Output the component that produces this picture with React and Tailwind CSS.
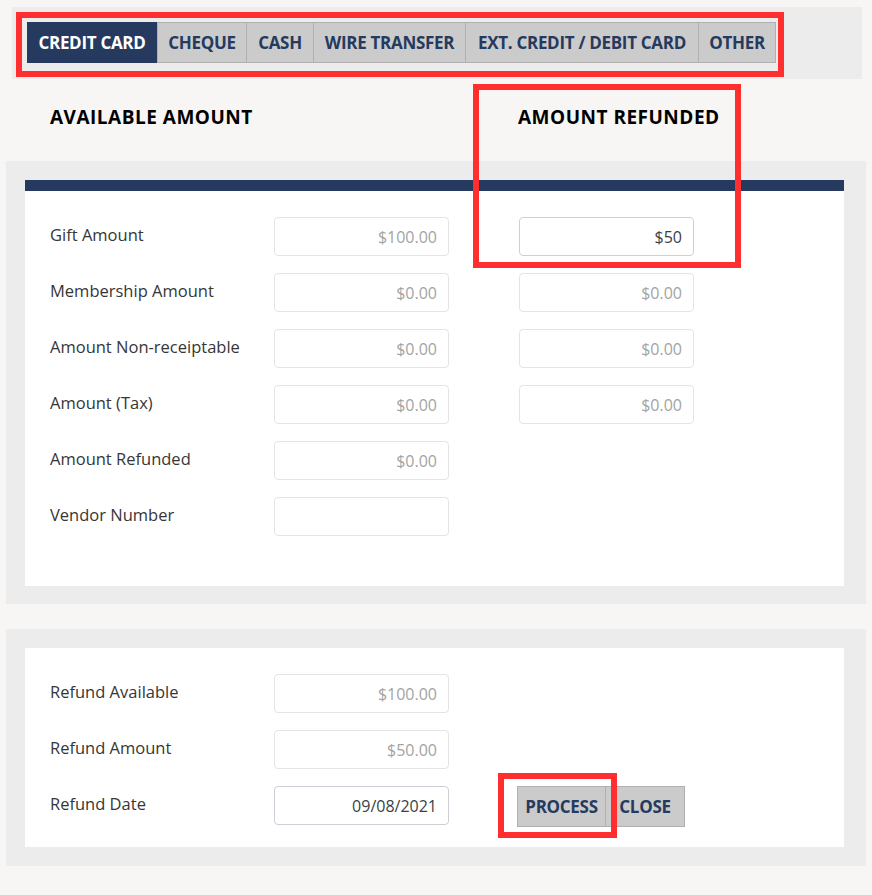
import React from "react";

const tabs = [
  { t: "CREDIT CARD", w: "w-[130px]", active: true },
  { t: "CHEQUE", w: "w-[90px]" },
  { t: "CASH", w: "w-[68px] -ml-px" },
  { t: "WIRE TRANSFER", w: "w-[153px] -ml-px" },
  { t: "EXT. CREDIT / DEBIT CARD", w: "w-[234px] -ml-px" },
  { t: "OTHER", w: "w-[78px] -ml-px" },
];

function Field({ value, enabled, className = "" }) {
  return (
    <div
      className={
        "w-[175px] h-[39px] rounded-[4px] border bg-white flex items-center justify-end pr-[11px] text-[16px] " +
        (enabled ? "border-[#ccd0d6] text-[#3a3f46]" : "border-[#e4e4e4] text-[#a3a3a3]") +
        " " +
        className
      }
    >
      {value}
    </div>
  );
}

function Label({ children }) {
  return <div className="w-[224px] text-[16.5px] font-medium text-[#363636] -mt-[3px]">{children}</div>;
}

function Row({ label, a, b, bEnabled, aEnabled }) {
  return (
    <div className="flex items-center h-[39px]">
      <Label>{label}</Label>
      {a !== undefined && <Field value={a} enabled={aEnabled} />}
      {b !== undefined && <Field value={b} enabled={bEnabled} className="ml-[70px]" />}
    </div>
  );
}

export default function App() {
  return (
    <div className="relative min-h-[895px] bg-[#f7f6f4] pt-[7px] font-['Open_Sans',sans-serif]">
      {/* Tab bar */}
      <div className="ml-[12px] w-[850px] h-[72px] bg-[#ececec] pt-[15px] pl-[15px]">
        <div className="flex h-[41px]">
          {tabs.map((tab) => (
            <div
              key={tab.t}
              className={
                "h-[41px] flex items-center justify-center font-bold text-[17px] tracking-[-0.3px] " +
                tab.w +
                " " +
                (tab.active
                  ? "bg-[#253a5e] text-white"
                  : "bg-[#cbcbcb] text-[#253a5e] border border-[#b0b0b0]")
              }
            >
              {tab.t}
            </div>
          ))}
        </div>
      </div>

      {/* Headings */}
      <div className="flex h-[82px] items-center pl-[50px]">
        <div className="w-[468px] text-[19px] font-bold tracking-[0.5px] text-black -mt-[5px]">AVAILABLE AMOUNT</div>
        <div className="text-[19px] font-bold tracking-[0.5px] text-black -mt-[5px]">AMOUNT REFUNDED</div>
      </div>

      {/* Panel 1 */}
      <div className="mx-[6px] bg-[#ececec] pt-[19px] pb-[18px] pl-[19px] pr-[22px]">
        <div className="bg-white border-t-[11px] border-[#253a5e] pt-[26px] pb-[50px] pl-[25px] flex flex-col gap-[17px]">
          <Row label="Gift Amount" a="$100.00" b="$50" bEnabled />
          <Row label="Membership Amount" a="$0.00" b="$0.00" />
          <Row label="Amount Non-receiptable" a="$0.00" b="$0.00" />
          <Row label="Amount (Tax)" a="$0.00" b="$0.00" />
          <Row label="Amount Refunded" a="$0.00" />
          <Row label="Vendor Number" a="" />
        </div>
      </div>

      {/* Panel 2 */}
      <div className="mx-[6px] mt-[25px] bg-[#ececec] pt-[19px] pb-[19px] pl-[19px] pr-[22px]">
        <div className="bg-white pt-[26px] pb-[22px] pl-[25px] flex flex-col gap-[17px]">
          <Row label="Refund Available" a="$100.00" />
          <Row label="Refund Amount" a="$50.00" />
          <div className="flex items-center h-[39px]">
            <Label>Refund Date</Label>
            <Field value="09/08/2021" enabled />
            <div className="ml-[68px] flex self-start">
              <div className="h-[41px] w-[89px] justify-center flex items-center bg-[#cbcbcb] border border-[#b0b0b0] text-[#253a5e] font-bold text-[17px] tracking-[-0.3px]">
                PROCESS
              </div>
              <div className="h-[41px] w-[79px] justify-center flex items-center bg-[#cbcbcb] border border-[#b0b0b0] border-l-0 text-[#253a5e] font-bold text-[17px] tracking-[-0.3px]">
                CLOSE
              </div>
            </div>
          </div>
        </div>
      </div>

      {/* Red annotation boxes */}
      <div className="absolute left-[16px] top-[12px] w-[768px] h-[65px] border-[6px] border-[#ff2f2f] pointer-events-none" />
      <div className="absolute left-[473px] top-[84px] w-[268px] h-[184px] border-[6px] border-[#ff2f2f] pointer-events-none" />
      <div className="absolute left-[498px] top-[773px] w-[119px] h-[65px] border-[6px] border-[#ff2f2f] pointer-events-none" />
    </div>
  );
}
